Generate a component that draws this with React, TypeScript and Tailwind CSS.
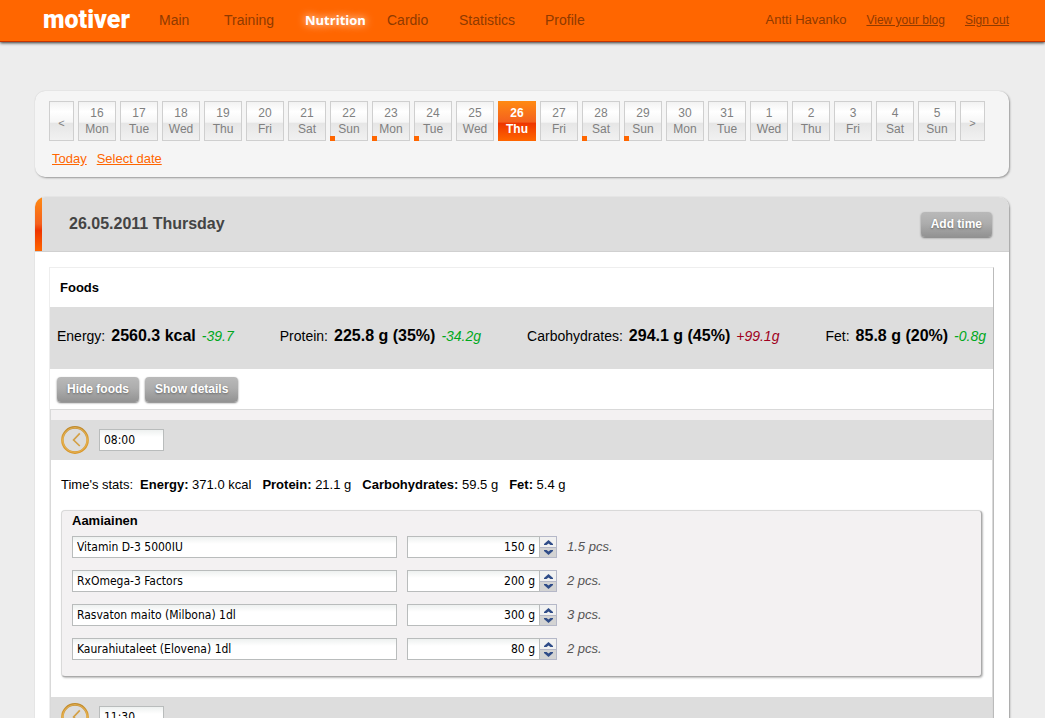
import { useId } from "react";

type Day = { date: number; name: string; marked?: boolean; selected?: boolean };

const days: Day[] = [
  { date: 16, name: "Mon" },
  { date: 17, name: "Tue" },
  { date: 18, name: "Wed" },
  { date: 19, name: "Thu" },
  { date: 20, name: "Fri" },
  { date: 21, name: "Sat" },
  { date: 22, name: "Sun", marked: true },
  { date: 23, name: "Mon", marked: true },
  { date: 24, name: "Tue", marked: true },
  { date: 25, name: "Wed" },
  { date: 26, name: "Thu", selected: true },
  { date: 27, name: "Fri" },
  { date: 28, name: "Sat", marked: true },
  { date: 29, name: "Sun", marked: true },
  { date: 30, name: "Mon" },
  { date: 31, name: "Tue" },
  { date: 1, name: "Wed" },
  { date: 2, name: "Thu" },
  { date: 3, name: "Fri" },
  { date: 4, name: "Sat" },
  { date: 5, name: "Sun" },
];

const totals = [
  { label: "Energy:", value: "2560.3 kcal", diff: "-39.7", good: true },
  { label: "Protein:", value: "225.8 g (35%)", diff: "-34.2g", good: true },
  { label: "Carbohydrates:", value: "294.1 g (45%)", diff: "+99.1g", good: false },
  { label: "Fet:", value: "85.8 g (20%)", diff: "-0.8g", good: true },
];

const timeStats = [
  { label: "Energy:", value: "371.0 kcal" },
  { label: "Protein:", value: "21.1 g" },
  { label: "Carbohydrates:", value: "59.5 g" },
  { label: "Fet:", value: "5.4 g" },
];

const foods = [
  { name: "Vitamin D-3 5000IU", amount: "150 g", portion: "1.5 pcs." },
  { name: "RxOmega-3 Factors", amount: "200 g", portion: "2 pcs." },
  { name: "Rasvaton maito (Milbona) 1dl", amount: "300 g", portion: "3 pcs." },
  { name: "Kaurahiutaleet (Elovena) 1dl", amount: "80 g", portion: "2 pcs." },
];

const field =
  "h-[22px] border border-[#b9bcbc] bg-linear-to-b from-[#eef1f0] to-white to-35% px-1 text-[12px] text-black outline-none font-['DejaVu_Sans_Condensed','Noto_Sans',sans-serif]";

function GrayButton({ children }: { children: string }) {
  return (
    <button
      type="button"
      className="h-[25px] rounded-[4px] bg-linear-to-b from-[#b9b9b9] from-0% via-[#adadad] via-45% to-[#929292] px-[10px] text-[12px] leading-[25px] font-bold whitespace-nowrap text-white shadow-[0_1px_2px_#777] [text-shadow:0_1px_2px_#666]"
    >
      {children}
    </button>
  );
}

function ArrowButton({ label, children }: { label: string; children: string }) {
  return (
    <button
      type="button"
      aria-label={label}
      className="h-10 w-[25px] shrink-0 border border-[#cfcfcf] bg-[linear-gradient(#f2f2f2,#fff_25%,#f6f6f6_53%,#e6e6e6_56%,#f1f1f1)] pt-1 text-[11px] text-[#808080]"
    >
      {children}
    </button>
  );
}

function DayButton({ day }: { day: Day }) {
  return (
    <button
      type="button"
      className={
        day.selected
          ? "flex h-10 w-[38px] shrink-0 flex-col items-center bg-[linear-gradient(#ff8a12,#f4601e_53%,#ee3500_55%,#ff6600)] pt-1 text-[12px] leading-4 font-bold text-white"
          : "relative flex h-10 w-[38px] shrink-0 flex-col items-center border border-[#cfcfcf] bg-[linear-gradient(#f2f2f2,#fff_25%,#f6f6f6_53%,#e6e6e6_56%,#f1f1f1)] pt-[3px] text-[12px] leading-4 text-[#808080]"
      }
    >
      <span>{day.date}</span>
      <span>{day.name}</span>
      {day.marked && <span className="absolute -bottom-px -left-px size-[5px] bg-[#ff6600]" />}
    </button>
  );
}

function ClockIcon() {
  const id = useId();
  return (
    <svg viewBox="0 0 28 28" className="size-7 shrink-0" fill="none" aria-hidden="true">
      <defs>
        <linearGradient id={id} x1="0" y1="0" x2="0" y2="1">
          <stop offset="0" stopColor="#c08a2c" />
          <stop offset="0.5" stopColor="#dda136" />
          <stop offset="1" stopColor="#d8962a" />
        </linearGradient>
      </defs>
      <circle cx="14" cy="14" r="12.6" stroke={`url(#${id})`} strokeWidth="2.6" />
      <circle cx="14" cy="14" r="12.4" stroke="#e8b95f" strokeWidth="0.8" />
      <path d="M18.8 7.4 12.6 14 18.8 20" stroke="#d3a046" strokeWidth="1.7" />
    </svg>
  );
}

function TimeBar({ time }: { time: string }) {
  return (
    <div className="flex h-10 items-center gap-[10px] bg-[#ddd] px-[10px]">
      <ClockIcon />
      <input aria-label="Time" defaultValue={time} className={`${field} w-[65px]`} />
    </div>
  );
}

function Spinner() {
  return (
    <div className="flex h-[22px] w-[17px] shrink-0 flex-col border-y border-r border-[#b5b8c8]">
      <button
        type="button"
        aria-label="Increase"
        className="flex h-[10px] items-center justify-center bg-[#f1f1f1]"
      >
        <svg viewBox="0 0 9 5" className="h-[5px] w-[9px]" aria-hidden="true">
          <path d="M4.5 0 9 4V5H6.4L4.5 3.4 2.6 5H0V4Z" fill="#2f4c88" />
        </svg>
      </button>
      <button
        type="button"
        aria-label="Decrease"
        className="flex h-[10px] items-center justify-center border-t border-[#b5b8c8] bg-[#d3d3d3]"
      >
        <svg viewBox="0 0 9 5" className="h-[5px] w-[9px]" aria-hidden="true">
          <path d="M4.5 5 9 1V0H6.4L4.5 1.6 2.6 0H0V1Z" fill="#2f4c88" />
        </svg>
      </button>
    </div>
  );
}

function NavLink({ width, children }: { width: string; children: string }) {
  return (
    <a href="#" className={`${width} whitespace-nowrap`}>
      {children}
    </a>
  );
}

export default function App() {
  return (
    <div className="h-screen overflow-y-auto bg-[#ededed] font-['Liberation_Sans',Arial,sans-serif] text-[13px] text-black [scrollbar-width:none]">
      <header className="flex h-[42px] items-center border-b border-[#c43400] bg-[#ff6600] pr-9 pb-px pl-[43px] text-[#8f3a00] shadow-[0_1px_3px_#333]">
        <a
          href="#"
          className="w-[116px] pb-px font-['Roboto',sans-serif] text-[25px] leading-8 font-black text-white"
        >
          motiver
        </a>
        <nav className="flex flex-1 items-center gap-[30px] text-[14px] leading-5">
          <NavLink width="w-[35px]">Main</NavLink>
          <NavLink width="w-[51px]">Training</NavLink>
          <a
            href="#"
            aria-current="page"
            className="w-[52px] font-['Open_Sans',sans-serif] text-[13px] font-bold whitespace-nowrap text-white [text-shadow:0_0_8px_#fff]"
          >
            Nutrition
          </a>
          <NavLink width="w-[42px]">Cardio</NavLink>
          <NavLink width="w-[56px]">Statistics</NavLink>
          <NavLink width="w-[42px]">Profile</NavLink>
        </nav>
        <div className="flex items-center gap-5 text-[12px] whitespace-nowrap">
          <span className="text-[13px]">Antti Havanko</span>
          <a href="#" className="underline">
            View your blog
          </a>
          <a href="#" className="underline">
            Sign out
          </a>
        </div>
      </header>

      <main className="mt-[49px] flex flex-col gap-5 pr-9 pl-[35px]">
        <section className="rounded-[10px] bg-[#f5f5f5] px-[14px] pt-[10px] pb-2 shadow-[1px_1px_2px_#999,0_0_1px_#ccc]">
          <div className="flex gap-1">
            <ArrowButton label="Earlier">&lt;</ArrowButton>
            {days.map((day) => (
              <DayButton key={`${day.date}-${day.name}`} day={day} />
            ))}
            <ArrowButton label="Later">&gt;</ArrowButton>
          </div>
          <div className="mt-2 flex gap-[10px] px-[3px] leading-5 text-[#ff6600]">
            <a href="#" className="underline">
              Today
            </a>
            <a href="#" className="underline">
              Select date
            </a>
          </div>
        </section>

        <section className="rounded-t-[10px] bg-white shadow-[1px_1px_2px_#999,0_0_1px_#ccc]">
          <div className="flex h-[55px] items-stretch overflow-hidden rounded-t-[10px] border-b border-[#d0d0d0] bg-[#ddd]">
            <div className="w-[7px] bg-[linear-gradient(#ff8a12,#f4601e_50%,#ee3500_62%,#ff6600)]" />
            <div className="flex flex-1 items-center justify-between pr-[17px] pl-[27px]">
              <h1 className="text-[16px] font-bold text-[#444]">26.05.2011 Thursday</h1>
              <GrayButton>Add time</GrayButton>
            </div>
          </div>

          <div className="pt-[15px] pr-[15px] pb-4 pl-[14px]">
            <div className="border-t border-r border-l border-t-[#eee] border-r-[#bbb] border-l-[#eee]">
              <h2 className="px-[10px] leading-[39px] font-bold">Foods</h2>
              <dl className="flex h-[62px] items-center justify-between bg-[#ddd] px-[7px] pb-1">
                {totals.map((total) => (
                  <div key={total.label} className="flex items-baseline gap-[6px] whitespace-nowrap">
                    <dt className="text-[14px]">{total.label}</dt>
                    <dd className="text-[16px] font-bold">{total.value}</dd>
                    <dd
                      className={
                        total.good
                          ? "text-[14px] text-[#00a81c] italic"
                          : "text-[14px] text-[#a00020] italic"
                      }
                    >
                      {total.diff}
                    </dd>
                  </div>
                ))}
              </dl>
              <div className="flex h-10 items-center gap-[6px] px-[7px]">
                <GrayButton>Hide foods</GrayButton>
                <GrayButton>Show details</GrayButton>
              </div>

              <div className="border-t border-r border-l border-[#d9d9d9]">
                <div className="h-[10px] bg-[#f3f1f2]" />
                <TimeBar time="08:00" />
                <div className="flex gap-[11px] px-[10px] pt-[15px] leading-5 whitespace-nowrap">
                  <div className="flex gap-[7px]">
                    <span>Time's stats:</span>
                    <span>
                      <b>{timeStats[0].label}</b> {timeStats[0].value}
                    </span>
                  </div>
                  {timeStats.slice(1).map((stat) => (
                    <span key={stat.label}>
                      <b>{stat.label}</b> {stat.value}
                    </span>
                  ))}
                </div>
                <div className="mx-[10px] mt-[15px] mb-5 rounded-[4px] border border-[#d9d9d9] border-r-[#aaa] border-b-[#aaa] bg-[#f3f1f2] px-[10px] pb-4 shadow-[1px_1px_2px_#bbb]">
                  <h3 className="leading-5 font-bold">Aamiainen</h3>
                  <div className="mt-[5px] flex flex-col gap-3">
                    {foods.map((food) => (
                      <div key={food.name} className="flex items-center gap-[10px]">
                        <input
                          aria-label="Food"
                          defaultValue={food.name}
                          className={`${field} w-[325px]`}
                        />
                        <div className="flex">
                          <input
                            aria-label={`Amount of ${food.name}`}
                            defaultValue={food.amount}
                            className={`${field} w-[133px] text-right`}
                          />
                          <Spinner />
                        </div>
                        <span className="text-[#555] italic">{food.portion}</span>
                      </div>
                    ))}
                  </div>
                </div>
                <TimeBar time="11:30" />
              </div>
            </div>
          </div>
        </section>
      </main>
    </div>
  );
}
